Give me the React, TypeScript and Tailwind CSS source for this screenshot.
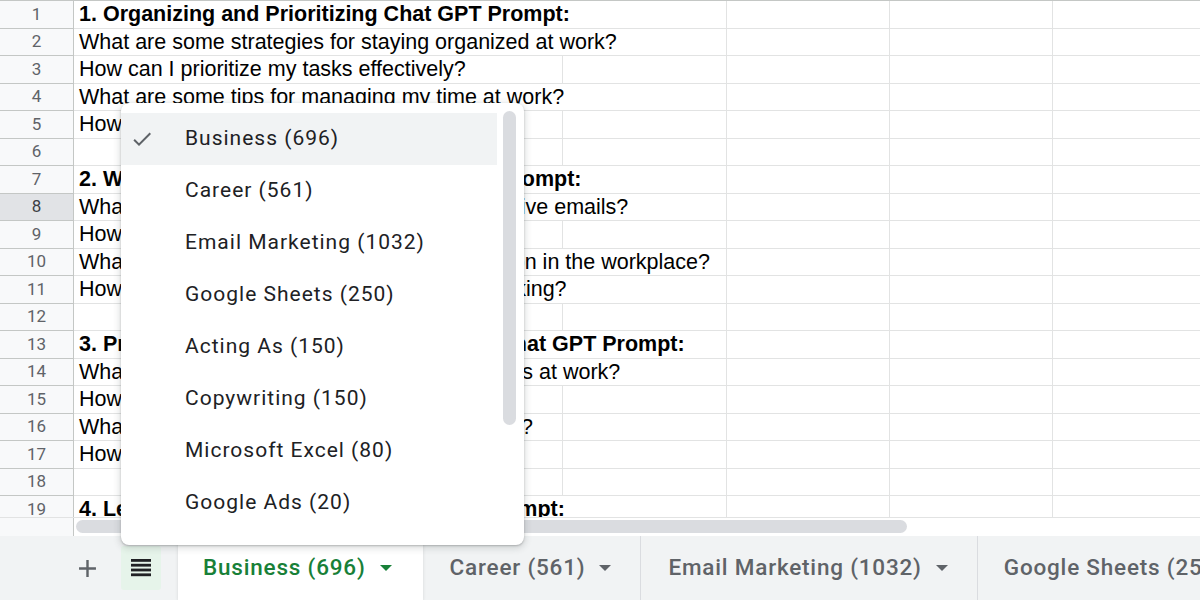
import React from "react";

type Row = { text: string; bold?: boolean; span?: boolean };

const rows: Row[] = [
  { text: "1. Organizing and Prioritizing Chat GPT Prompt:", bold: true, span: true },
  { text: "What are some strategies for staying organized at work?", span: true },
  { text: "How can I prioritize my tasks effectively?" },
  { text: "What are some tips for managing my time at work?", span: true },
  { text: "How can I stay focused at work?" },
  { text: "" },
  { text: "2. Writing and Communication Chat GPT Prompt:", bold: true, span: true },
  { text: "What are some tips for writing clean and effective emails?", span: true },
  { text: "How can I improve my writing skills?" },
  { text: "What are some ways to improve communication in the workplace?", span: true },
  { text: "How can I improve my abilities for public speaking?", span: true },
  { text: "" },
  { text: "3. Problem Solving and Decision Making Chat GPT Prompt:", bold: true, span: true },
  { text: "What are some techniques for solving problems at work?", span: true },
  { text: "How can I make better decisions?" },
  { text: "What are some ways to think more analytically?" },
  { text: "How can I handle difficult situations?" },
  { text: "" },
  { text: "4. Leadership and Teamwork Chat GPT Prompt:", bold: true, span: true },
];

const menuItems = [
  "Business (696)",
  "Career (561)",
  "Email Marketing (1032)",
  "Google Sheets (250)",
  "Acting As (150)",
  "Copywriting (150)",
  "Microsoft Excel (80)",
  "Google Ads (20)",
];

function Arrow({ color }: { color: string }) {
  return (
    <svg width="12" height="6" viewBox="0 0 12 6" className="shrink-0">
      <path d="M0 0 L12 0 L6 6 Z" fill={color} />
    </svg>
  );
}

function GridRow({ row, index }: { row: Row; index: number }) {
  const selected = index === 7;
  return (
    <div className="flex h-[27.5px] shrink-0">
      <div
        className={`w-[74px] shrink-0 flex items-center justify-center border-r border-b border-[#c4c7c5] text-[17px] ${
          selected ? "bg-[#e1e3e6] text-[#3c4043]" : "bg-[#f8f9fa] text-[#5f6368]"
        }`}
        style={{ fontFamily: "Roboto, Arial, sans-serif" }}
      >
        {index + 1}
      </div>
      {row.span ? (
        <div className="w-[653px] shrink-0 border-r border-b border-[#e2e3e3] flex items-center pl-[5px] overflow-hidden whitespace-nowrap">
          <span className={row.bold ? "font-bold" : ""}>{row.text}</span>
        </div>
      ) : (
        <>
          <div className="w-[489px] shrink-0 border-r border-b border-[#e2e3e3] flex items-center pl-[5px] overflow-hidden whitespace-nowrap">
            <span className={row.bold ? "font-bold" : ""}>{row.text}</span>
          </div>
          <div className="w-[164px] shrink-0 border-r border-b border-[#e2e3e3]" />
        </>
      )}
      <div className="w-[163px] shrink-0 border-r border-b border-[#e2e3e3]" />
      <div className="w-[163px] shrink-0 border-r border-b border-[#e2e3e3]" />
      <div className="flex-1 border-b border-[#e2e3e3]" />
    </div>
  );
}

export default function App() {
  return (
    <div
      className="relative w-[1200px] h-[600px] overflow-hidden bg-white flex flex-col"
      style={{ fontFamily: "'Liberation Sans', Arial, sans-serif" }}
    >
      {/* Grid */}
      <div className="h-[517px] shrink-0 overflow-hidden flex flex-col border-t border-[#c4c7c5] text-[21.5px] text-black">
        {rows.map((r, i) => (
          <GridRow key={i} row={r} index={i} />
        ))}
      </div>

      {/* Horizontal scrollbar strip */}
      <div className="h-[19px] shrink-0 flex border-t border-[#e2e3e3]">
        <div className="w-[74px] shrink-0 bg-[#f8f9fa] border-r border-[#c4c7c5]" />
        <div className="flex-1 pt-[2px] pl-[2px]">
          <div className="w-[831px] h-[13px] rounded-full bg-[#dadce0]" />
        </div>
      </div>

      {/* Tab bar */}
      <div
        className="h-[64px] shrink-0 bg-[#f1f3f4] flex items-stretch text-[22.5px] font-medium tracking-[0.8px] text-[#5f6368] whitespace-nowrap overflow-hidden"
        style={{ fontFamily: "Roboto, Arial, sans-serif" }}
      >
        <div className="w-[121px] shrink-0 flex items-center justify-end pr-[19px]">
          <svg width="29" height="29" viewBox="0 0 24 24">
            <path d="M19 13h-6v6h-2v-6H5v-2h6V5h2v6h6v2z" fill="#5f6368" />
          </svg>
        </div>
        <div className="w-[40px] shrink-0 flex items-center justify-center my-[10px] bg-[#e6f4ea] rounded-[3px]">
          <svg width="20" height="18" viewBox="0 0 20 18">
            <rect x="0" y="0" width="20" height="2.8" fill="#202124" />
            <rect x="0" y="4.8" width="20" height="2.8" fill="#202124" />
            <rect x="0" y="9.6" width="20" height="2.8" fill="#202124" />
            <rect x="0" y="14.4" width="20" height="2.8" fill="#202124" />
          </svg>
        </div>
        <div className="w-[17px] shrink-0" />
        <div className="shrink-0 bg-white flex items-center gap-[14px] pl-[25px] pr-[31px] text-[#188038] shadow-[0_1px_3px_rgba(60,64,67,0.15)]">
          <span>Business (696)</span>
          <Arrow color="#188038" />
        </div>
        <div className="shrink-0 flex items-center gap-[14px] pl-[27px] pr-[29px] border-r border-[#dadce0]">
          <span>Career (561)</span>
          <Arrow color="#5f6368" />
        </div>
        <div className="shrink-0 flex items-center gap-[14px] pl-[27px] pr-[29px] border-r border-[#dadce0]">
          <span>Email Marketing (1032)</span>
          <Arrow color="#5f6368" />
        </div>
        <div className="shrink-0 flex items-center gap-[14px] pl-[26px] pr-[29px]">
          <span>Google Sheets (250)</span>
          <Arrow color="#5f6368" />
        </div>
      </div>

      {/* Dropdown menu */}
      <div
        className="absolute left-[121px] top-[103px] w-[403px] h-[442px] bg-white rounded-[8px] shadow-[0_2px_6px_2px_rgba(60,64,67,0.15),0_1px_2px_rgba(60,64,67,0.3)] overflow-hidden"
        style={{ fontFamily: "Roboto, Arial, sans-serif" }}
      >
        <div className="pt-[10px] w-[376px] flex flex-col">
          {menuItems.map((m, i) => (
            <div
              key={m}
              className={`h-[52px] flex items-center text-[21px] tracking-[1px] text-[#202124] ${
                i === 0 ? "bg-[#f1f3f4]" : ""
              }`}
            >
              <div className="w-[64px] shrink-0 flex items-center justify-start pl-[9px]">
                {i === 0 && (
                  <svg width="24" height="24" viewBox="0 0 24 24">
                    <path d="M9 16.17L4.83 12l-1.42 1.41L9 19 21 7l-1.41-1.41z" fill="#5f6368" />
                  </svg>
                )}
              </div>
              <span>{m}</span>
            </div>
          ))}
        </div>
        <div className="absolute left-[382px] top-[8px] w-[13px] h-[314px] rounded-full bg-[#dadce0]" />
      </div>
    </div>
  );
}
